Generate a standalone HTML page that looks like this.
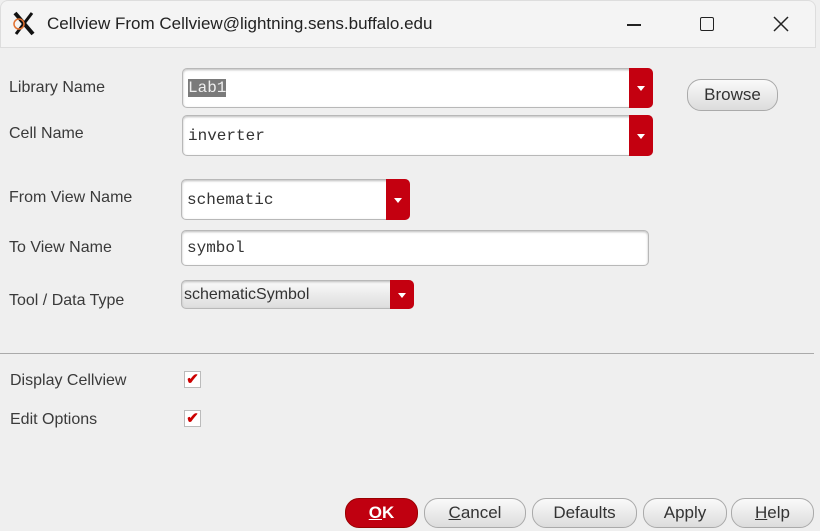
<!DOCTYPE html><html><head><style>
body{margin:0;width:820px;height:531px;background:#efefef;font-family:"Liberation Sans",sans-serif;position:relative;overflow:hidden;color:#333}
.a{position:absolute}
.title{left:0;top:0;width:814px;height:46px;background:#f4f4f4;border-radius:8px 8px 0 0;border:1px solid #ddd}
.lbl{font-size:16px;color:#3a3a3a}
.box{background:#fff;border:1px solid #b8b8b8;border-radius:5px;box-shadow:inset 0 1px 2px #bbb;font-family:"Liberation Mono",monospace;font-size:16px;box-sizing:border-box;padding-left:5px;display:flex;align-items:center}
.dd{position:absolute;right:-1px;top:-1px;bottom:-1px;width:24px;background:#c40010;border-radius:0 5px 5px 0;}
.dd:after{content:"";position:absolute;left:8px;top:50%;margin-top:-2px;border-left:4px solid transparent;border-right:4px solid transparent;border-top:5px solid #fff}
.btn{border:1px solid #aaa;border-radius:14px;background:linear-gradient(#fafafa,#dcdcdc);font-size:17px;color:#333;display:flex;align-items:center;justify-content:center;box-sizing:border-box}
.cb{width:17px;height:17px;background:#fff;border:1px solid #bbb;box-sizing:border-box;color:#c00;font-size:15px;line-height:15px;text-align:center;font-weight:bold}
</style></head><body>
<div class="a title"></div>
<svg class="a" style="left:11px;top:10px" width="28" height="26"><path d="M4 3 L22 24" stroke="#111" stroke-width="4"/><path d="M21 3 L5 24" stroke="#111" stroke-width="3"/><circle cx="8" cy="14" r="5" fill="none" stroke="#e07030" stroke-width="1.5"/></svg>
<div class="a" style="left:47px;top:14px;font-size:17px;color:#222">Cellview From Cellview@lightning.sens.buffalo.edu</div>
<div class="a" style="left:627px;top:24px;width:14px;height:1.5px;background:#222"></div>
<div class="a" style="left:700px;top:17px;width:12px;height:12px;border:1.5px solid #222;border-radius:2px"></div>
<svg class="a" style="left:773px;top:16px" width="16" height="16"><path d="M1 1L15 15M15 1L1 15" stroke="#222" stroke-width="1.5"/></svg>

<div class="a lbl" style="left:9px;top:79px">Library Name</div>
<div class="a box" style="left:182px;top:68px;width:471px;height:40px"><span style="background:#7a7a7a;color:#eee">Lab1</span><div class="dd"></div></div>
<div class="a btn" style="left:687px;top:79px;width:91px;height:32px">Browse</div>
<div class="a lbl" style="left:9px;top:125px">Cell Name</div>
<div class="a box" style="left:182px;top:115px;width:471px;height:41px">inverter<div class="dd"></div></div>
<div class="a lbl" style="left:9px;top:189px">From View Name</div>
<div class="a box" style="left:181px;top:179px;width:229px;height:41px">schematic<div class="dd"></div></div>
<div class="a lbl" style="left:9px;top:239px">To View Name</div>
<div class="a box" style="left:181px;top:230px;width:468px;height:36px">symbol</div>
<div class="a lbl" style="left:9px;top:292px">Tool / Data Type</div>
<div class="a box" style="left:181px;top:280px;width:233px;height:29px;font-family:'Liberation Sans',sans-serif;background:linear-gradient(#fafafa,#ddd);padding-left:2px">schematicSymbol<div class="dd"></div></div>
<div class="a" style="left:0;top:353px;width:814px;height:1px;background:#aaa"></div>
<div class="a lbl" style="left:10px;top:372px">Display Cellview</div>
<div class="a cb" style="left:184px;top:371px">✔</div>
<div class="a lbl" style="left:10px;top:411px">Edit Options</div>
<div class="a cb" style="left:184px;top:410px">✔</div>
<div class="a btn" style="left:345px;top:498px;width:73px;height:30px;background:#c00010;border-color:#900;color:#fff;font-weight:bold"><u>O</u>K</div>
<div class="a btn" style="left:424px;top:498px;width:102px;height:30px"><u>C</u>ancel</div>
<div class="a btn" style="left:532px;top:498px;width:105px;height:30px">Defaults</div>
<div class="a btn" style="left:643px;top:498px;width:84px;height:30px">Apply</div>
<div class="a btn" style="left:731px;top:498px;width:83px;height:30px"><u>H</u>elp</div>
</body></html>
